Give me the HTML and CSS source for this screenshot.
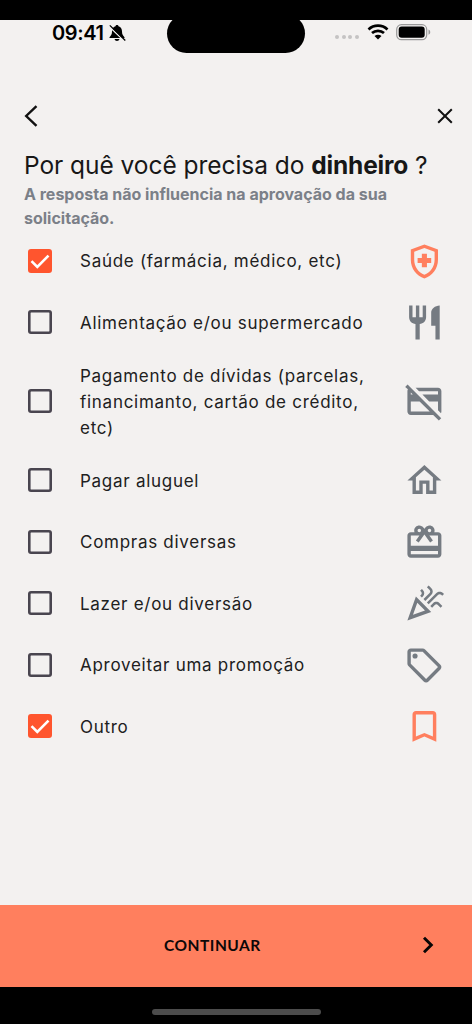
FILE: index.html
```html
<!DOCTYPE html>
<html lang="pt-BR">
<head>
<meta charset="utf-8">
<title>Por quê você precisa do dinheiro?</title>
<link rel="stylesheet" href="styles.css">
</head>
<body>
<div class="phone">
  <header class="status">
    <div class="status-left">
      <span class="time">09:41</span>
      <svg class="bell" viewBox="0 0 18 18"><path d="M9 1C8 1 7.500 1.600 7.500 2.300C5 3 4 5 4 7.500C4 10.500 3 11.500 1.500 13.200V14H16.500V13.200C15 11.500 14 10.500 14 7.500C14 5 13 3 10.500 2.300C10.500 1.600 10 1 9 1ZM6.500 15C7 17.600 11 17.600 11.500 15Z"/><path class="bell-gap" d="M1 2.200L16.500 17.300"/><path class="bell-slash" d="M1.800 1.400L17.300 16.500"/></svg>
    </div>
    <div class="island"></div>
    <div class="status-right">
      <div class="dots"><i></i><i></i><i></i><i></i></div>
      <svg class="wifi" viewBox="0 0 22 16"><path class="arc" d="M1.500 5.400C6.800.4 15.200.4 20.500 5.400M5 9.100C8.400 6 13.600 6 17 9.100"/><path d="M7.500 12.100C9.500 10.400 12.500 10.400 14.500 12.100L11 15.600Z"/></svg>
      <svg class="battery" viewBox="0 0 35 17"><rect class="shell" x=".7" y=".7" width="30" height="15" rx="4.700"/><rect x="2.700" y="2.600" width="26" height="11.200" rx="3"/><path class="cap" d="M32.500 5.600C34.800 6.500 34.800 9.900 32.500 10.800Z"/></svg>
    </div>
  </header>

  <nav class="nav">
    <svg class="back" viewBox="0 0 14 22"><path d="M12.500 1.200L2.200 11L12.500 20.800"/></svg>
    <svg class="close" viewBox="0 0 16 16"><path d="M1.200 1.200L14.800 14.800M14.800 1.200L1.200 14.800"/></svg>
  </nav>

  <main class="content">
    <h1 class="title">Por quê você precisa do <b>dinheiro</b> ?</h1>
    <p class="subtitle">A resposta não influencia na aprovação da sua<br>solicitação.</p>
    <ul class="options">
      <li class="option selected">
        <span class="box"><svg viewBox="0 0 24 24"><path d="M3.500 12.200L9.300 18L20.500 6.700"/></svg></span>
        <span class="label">Saúde (farmácia, médico, etc)</span>
        <svg class="icon" viewBox="0 0 24 24"><path d="M10.500 13H8v-3h2.500V7.500h3V10H16v3h-2.500v2.500h-3V13zM12 2L4 5v6.090c0 5.050 3.410 9.760 8 10.910c4.590-1.150 8-5.860 8-10.910V5L12 2zM18 11.090c0 4-2.550 7.700-6 8.830c-3.450-1.130-6-4.820-6-8.830v-4.700l6-2.250l6 2.250V11.090z"/></svg>
      </li>
      <li class="option">
        <span class="box"></span>
        <span class="label">Alimentação e/ou supermercado</span>
        <svg class="icon" viewBox="0 0 24 24"><path d="M11 9H9V2H7v7H5V2H3v7c0 2.120 1.660 3.840 3.750 3.970V22h2.500v-9.030C11.340 12.840 13 11.120 13 9V2h-2v7zm5-3v8h2.500v8H21V2c-2.760 0-5 2.240-5 4z"/></svg>
      </li>
      <li class="option tall">
        <span class="box"></span>
        <span class="label">Pagamento de dívidas (parcelas,<br>financimanto, cartão de crédito,<br>etc)</span>
        <svg class="icon" viewBox="0 0 24 24"><path d="M6.830 4H20c1.110 0 2 .89 2 2v12c0 .34-.09.66-.23.94L20 17.170V12h-5.170l-4-4H20V6H8.830L6.830 4zM20.490 23.310L17.170 20H4c-1.110 0-2-.89-2-2L2.010 6c0-.42.11-.78.300-1.100L.69 3.510 2.100 2.100l19.800 19.800L20.490 23.310zM4 6.830V8h1.170L4 6.830zM15.170 18l-6-6H4v6H15.170z"/></svg>
      </li>
      <li class="option">
        <span class="box"></span>
        <span class="label">Pagar aluguel</span>
        <svg class="icon" viewBox="0 0 24 24"><path d="M12 5.690l5 4.500V18h-2v-6H9v6H7v-7.810l5-4.500M12 3L2 12h3v8h6v-6h2v6h6v-8h3L12 3z"/></svg>
      </li>
      <li class="option">
        <span class="box"></span>
        <span class="label">Compras diversas</span>
        <svg class="icon" viewBox="0 0 24 24"><path d="M20 6h-2.180c.11-.31.18-.65.18-1 0-1.660-1.340-3-3-3-1.050 0-1.960.54-2.500 1.350l-.5.670-.5-.68C10.960 2.540 10.050 2 9 2 7.340 2 6 3.340 6 5c0 .35.07.69.18 1H4c-1.110 0-1.990.89-1.990 2L2 19c0 1.110.89 2 2 2h16c1.110 0 2-.89 2-2V8c0-1.110-.89-2-2-2zm-5-2c.55 0 1 .45 1 1s-.45 1-1 1-1-.45-1-1 .45-1 1-1zM9 4c.55 0 1 .45 1 1s-.45 1-1 1-1-.45-1-1 .45-1 1-1zm11 15H4v-2h16v2zm0-5H4V8h5.080L7 10.830 8.620 12 12 7.400l3.380 4.600L17 10.830 14.920 8H20v6z"/></svg>
      </li>
      <li class="option">
        <span class="box"></span>
        <span class="label">Lazer e/ou diversão</span>
        <svg class="icon" viewBox="0 0 24 24"><path d="M2 22l14-5-9-9L2 22zm10.350-5.820L5.300 18.700l2.520-7.050 4.530 4.530zM14.530 12.530l5.590-5.590c.49-.49 1.280-.49 1.770 0l.59.59 1.060-1.060-.59-.59c-1.070-1.070-2.820-1.070-3.890 0l-5.590 5.590 1.060 1.060zM10.060 6.880l-.59.59 1.060 1.060.59-.59c1.070-1.070 1.070-2.820 0-3.890l-.59-.59-1.060 1.070.59.59c.48.48.48 1.280 0 1.760zM17.060 11.880l-1.590 1.590 1.060 1.060 1.590-1.590c.49-.49 1.280-.49 1.770 0l1.610 1.610 1.060-1.060-1.610-1.610c-1.080-1.070-2.820-1.070-3.900 0zM15.060 5.880l-3.590 3.590 1.060 1.060 3.590-3.590c1.070-1.070 1.070-2.820 0-3.890l-1.590-1.590-1.060 1.060 1.590 1.590c.48.49.48 1.290 0 1.770z"/></svg>
      </li>
      <li class="option">
        <span class="box"></span>
        <span class="label">Aproveitar uma promoção</span>
        <svg class="icon" viewBox="0 0 24 24"><path d="M21.410 11.580l-9-9C12.050 2.220 11.550 2 11 2H4c-1.100 0-2 .9-2 2v7c0 .55.22 1.050.59 1.420l9 9c.36.36.86.58 1.410.58s1.050-.22 1.410-.59l7-7c.37-.36.59-.86.59-1.410s-.23-1.060-.59-1.420zM13 20.010L4 11V4h7v-.01l9 9-7 7.020z"/><circle cx="6.500" cy="6.500" r="1.500"/></svg>
      </li>
      <li class="option selected">
        <span class="box"><svg viewBox="0 0 24 24"><path d="M3.500 12.200L9.300 18L20.500 6.700"/></svg></span>
        <span class="label">Outro</span>
        <svg class="icon" viewBox="0 0 24 24"><path d="M17 3H7c-1.100 0-2 .9-2 2v16l7-3 7 3V5c0-1.100-.9-2-2-2zm0 15l-5-2.180L7 18V5h10v13z"/></svg>
      </li>
    </ul>
  </main>

  <div class="continue">
    <span></span>
    <span class="continue-text">CONTINUAR</span>
    <svg class="next" viewBox="0 0 12 18"><path d="M2 1.800L9.300 9L2 16.200"/></svg>
  </div>
  <footer class="home"><div class="home-bar"></div></footer>
</div>
</body>
</html>
```
FILE: styles.css
```css
* { box-sizing: border-box; }
body { margin: 0; background: #000; font-family: Inter, sans-serif; }
svg { display: block; flex: none; }

.phone {
  width: 472px;
  height: 1024px;
  padding-top: 20px;
  display: flex;
  flex-direction: column;
  background: linear-gradient(#000 20px, #f3f1f0 20px);
}

.status {
  height: 33px;
  display: grid;
  grid-template-columns: 167px 138px 1fr;
  align-items: start;
}
.status-left { display: flex; padding-left: 52px; }
.time { width: 55px; font-size: 20px; line-height: 26px; font-weight: 600; letter-spacing: -0.4px; white-space: nowrap; }
.bell { width: 18px; height: 18px; margin: 3.500px 0 0 1px; }
.bell-gap { stroke: #f3f1f0; stroke-width: 1.4; fill: none; }
.bell-slash { stroke: #000; stroke-width: 1.3; fill: none; }
.island { height: 39px; margin-top: -6px; border-radius: 20px; background: #000; }
.status-right { display: flex; padding: 4px 0 0 30px; }
.dots { display: flex; gap: 2.500px; padding-top: 11px; width: 32px; }
.dots i { width: 4px; height: 4px; border-radius: 50%; background: #c5c3c3; }
.wifi { width: 22px; height: 16px; }
.wifi .arc { fill: none; stroke: #000; stroke-width: 2.700; }
.battery { width: 35px; height: 17px; margin-left: 7px; }
.battery .shell { fill: none; stroke: #999; stroke-width: 1.200; }
.battery .cap { fill: #999; }

.nav {
  height: 94px;
  padding: 51.500px 19px 0 24px;
  display: flex;
  justify-content: space-between;
  align-items: flex-start;
}
.nav path { fill: none; stroke: #111; }
.back { width: 14px; height: 22px; }
.back path { stroke-width: 2.400; }
.close { width: 16px; height: 16px; margin-top: 3px; }
.close path { stroke-width: 2; }

.content { flex: 1; }
.title {
  margin: 2px 0 0 24px;
  font-size: 24.500px;
  line-height: 32px;
  font-weight: 400;
  letter-spacing: -0.05px;
  color: #171717;
  white-space: nowrap;
}
.title b { font-weight: 700; letter-spacing: -0.15px; }
.subtitle {
  margin: 1px 0 0 24px;
  font-size: 16px;
  line-height: 24px;
  font-weight: 700;
  color: #7b8088;
  white-space: nowrap;
}
.options { margin: 0; padding: 0; list-style: none; }
.option {
  height: 61.500px;
  padding: 0 27px 0 28px;
  display: flex;
  align-items: center;
}
.option.tall { height: 96.500px; }
.box {
  flex: none;
  width: 24px;
  height: 24px;
  box-shadow: inset 0 0 0 2.600px #49454f;
  border-radius: 3px;
}
.selected .box { box-shadow: none; background: #ff552e; }
.box path { fill: none; stroke: #fff; stroke-width: 2.600; }
.label {
  flex: 1;
  margin-left: 28px;
  padding-top: 1.500px;
  font-size: 17px;
  line-height: 26.300px;
  letter-spacing: 0.72px;
  color: #202020;
  white-space: nowrap;
}
.icon { width: 40.800px; height: 40.800px; margin: 1px 0 0; fill: #757b82; }
.selected .icon { fill: #ff7f5e; }

.continue {
  height: 82px;
  padding: 0 38px 1px 0;
  display: grid;
  grid-template-columns: 164px 1fr 12px;
  align-items: center;
  background: #ff7f5e;
}
.continue-text { padding-bottom: 1px; font-family: Lato, sans-serif; font-size: 15.500px; font-weight: 700; letter-spacing: 0.5px; color: #0c0808; }
.next { width: 12px; height: 18px; }
.next path { fill: none; stroke: #080505; stroke-width: 2.900; }

.home {
  height: 37.500px;
  padding-top: 22px;
  display: flex;
  justify-content: center;
  align-items: flex-start;
  background: #000;
}
.home-bar { width: 169px; height: 6px; border-radius: 3px; background: #4c4c4c; }
```
